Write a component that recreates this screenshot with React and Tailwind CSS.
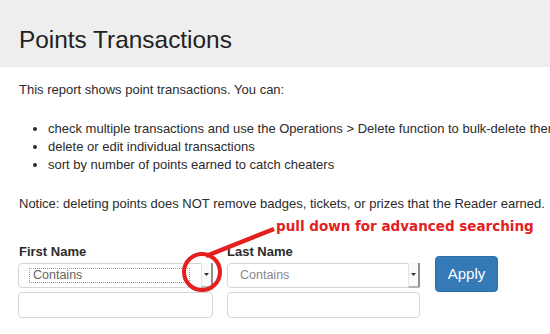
import React from "react";

function Arrow() {
  return (
    <svg width="5" height="3" viewBox="0 0 5 3" className="block">
      <polygon points="0,0 5,0 2.5,3" fill="#333" />
    </svg>
  );
}

function SelectBox({ width, dotted }) {
  return (
    <div
      className="relative flex items-center h-[25px] border border-[#d6d6d6] rounded-[4px] bg-white"
      style={{ width }}
    >
      {dotted ? (
        <div className="ml-[10px] w-[161px] h-[15px] border border-dotted border-[#9a9a9a] flex items-center pl-[3px] text-[12.5px] text-[#666] leading-none">
          Contains
        </div>
      ) : (
        <div className="ml-[12px] text-[12.5px] text-[#8a8a8a] leading-none">Contains</div>
      )}
      <div className="absolute right-[-1px] top-[-1px] bottom-[-1px] w-[12px] bg-[#fafafa] border-l border-[#e4e4e4] border-r-2 border-b-2 border-r-[#8f8f8f] border-b-[#b5b5b5] rounded-br-[2px] flex items-center justify-center">
        <Arrow />
      </div>
    </div>
  );
}

export default function App() {
  return (
    <div
      className="relative w-[550px] h-[334px] overflow-hidden bg-white text-[#2b2b2b]"
      style={{ fontFamily: '"Liberation Sans", Arial, sans-serif' }}
    >
      <div className="h-[67px] bg-[#eeeeee] pl-[19px] pt-[26px]">
        <h1 className="text-[24.4px] leading-[28px] text-[#222] whitespace-nowrap">Points Transactions</h1>
      </div>

      <div className="px-[19px] text-[13px] leading-[18px] whitespace-nowrap">
        <p className="mt-[14px]">This report shows point transactions. You can:</p>
        <ul className="mt-[21px] pl-[29px] list-disc">
          <li>check multiple transactions and use the Operations &gt; Delete function to bulk-delete them</li>
          <li>delete or edit individual transactions</li>
          <li>sort by number of points earned to catch cheaters</li>
        </ul>
        <p className="mt-[21px]">Notice: deleting points does NOT remove badges, tickets, or prizes that the Reader earned.</p>
      </div>

      <div className="flex items-start pl-[18px] mt-[30px]">
        <div className="w-[195px]">
          <div className="pl-px text-[13px] leading-[18px] font-bold mb-[2px]">First Name</div>
          <SelectBox width="195px" dotted />
          <div className="mt-[4px] h-[26px] border border-[#d6d6d6] rounded-[4px]" />
        </div>
        <div className="w-[193px] ml-[14px]">
          <div className="text-[13px] leading-[18px] font-bold mb-[2px]">Last Name</div>
          <SelectBox width="193px" />
          <div className="mt-[4px] h-[26px] border border-[#d6d6d6] rounded-[4px]" />
        </div>
        <button className="ml-[15px] mt-[13px] w-[63px] h-[36px] rounded-[4px] bg-[#337ab7] border border-[#2e6da4] text-white text-[15px]">
          Apply
        </button>
      </div>

      <svg className="absolute left-0 top-0 pointer-events-none" width="550" height="334">
        <circle cx="202" cy="272" r="18" fill="none" stroke="#e3201e" strokeWidth="4" />
        <line x1="206" y1="256" x2="274" y2="229" stroke="#e3201e" strokeWidth="4.5" />
      </svg>
      <div
        className="absolute left-[276px] top-[218px] text-[13.5px] leading-[16px] font-bold text-[#e3201e] whitespace-nowrap"
        style={{ fontFamily: '"DejaVu Sans", Verdana, sans-serif' }}
      >
        pull down for advanced searching
      </div>
    </div>
  );
}
